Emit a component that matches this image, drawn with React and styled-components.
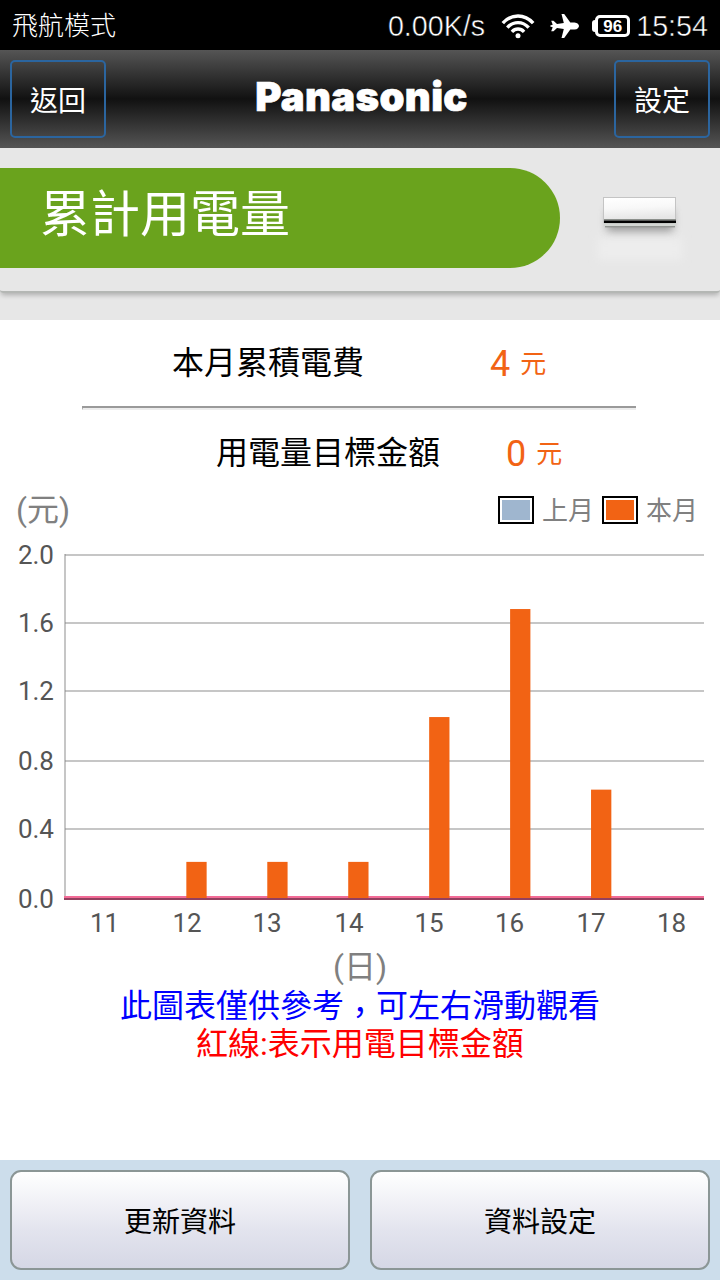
import React from "react";
import styled, { createGlobalStyle } from "styled-components";

const theme = {
  green: "#6aa31d",
  orange: "#f26314",
  blue: "#9fb6cf",
  grey: "#808080",
  panel: "#e7e7e7",
  font: 'Roboto, "Noto Sans CJK TC", sans-serif',
  fontStatus: '"Liberation Sans", "Noto Sans CJK TC", sans-serif',
};

const days = [
  { day: "11", x: 104.5, value: 0 },
  { day: "12", x: 187, value: 0.21 },
  { day: "13", x: 267, value: 0.21 },
  { day: "14", x: 349, value: 0.21 },
  { day: "15", x: 429, value: 1.052 },
  { day: "16", x: 509.5, value: 1.68 },
  { day: "17", x: 591, value: 0.63 },
  { day: "18", x: 671.5, value: 0 },
];

const ticks = [
  { label: "2.0", y: 555 },
  { label: "1.6", y: 623 },
  { label: "1.2", y: 691 },
  { label: "0.8", y: 761 },
  { label: "0.4", y: 829 },
];

export default function App() {
  return (
    <Screen>
      <GlobalStyle />
      <StatusBar>
        <div className="mode">飛航模式</div>
        <div className="speed">0.00K/s</div>
        <WifiIcon />
        <PlaneIcon />
        <BatteryIcon />
        <div className="time">15:54</div>
      </StatusBar>
      <Header>
        <HeaderButton>返回</HeaderButton>
        <Brand>Panasonic</Brand>
        <HeaderButton>設定</HeaderButton>
      </Header>
      <TitleArea>
        <TitlePanel>
          <TitleTab>累計用電量</TitleTab>
          <AirConditioner />
        </TitlePanel>
      </TitleArea>
      <Content>
        <SummaryRow $left={172}>
          <SummaryLabel $width={318}>本月累積電費</SummaryLabel>
          <Amount value="4" />
        </SummaryRow>
        <Divider />
        <SummaryRow $left={216}>
          <SummaryLabel $width={290}>用電量目標金額</SummaryLabel>
          <Amount value="0" />
        </SummaryRow>
        <ChartHead>
          <AxisUnit>(元)</AxisUnit>
          <Legend>
            <Swatch $color={theme.blue} />
            <span>上月</span>
            <Swatch $color={theme.orange} />
            <span>本月</span>
          </Legend>
        </ChartHead>
        <Chart />
        <AxisUnit $center>(日)</AxisUnit>
        <Note $color="#0000ff">
          此圖表僅供參考<Comma>，</Comma>可左右滑動觀看
        </Note>
        <Note $color="#ff0000">紅線:表示用電目標金額</Note>
      </Content>
      <Footer>
        <FooterButton>更新資料</FooterButton>
        <FooterButton>資料設定</FooterButton>
      </Footer>
    </Screen>
  );
}

function Amount({ value }) {
  return (
    <AmountBox>
      <span className="value">{value}</span>
      <span className="unit">元</span>
    </AmountBox>
  );
}

function Chart() {
  return (
    <ChartSvg viewBox="0 540 720 405">
      <rect x="64" y="554" width="2" height="346" fill="#808080" opacity="0.45" />
      {ticks.map((tick) => (
        <g key={tick.label}>
          <rect x="65" y={tick.y - 1} width="639" height="2" fill="#808080" opacity="0.45" />
          <text x="54" y={tick.y + 9} textAnchor="end">
            {tick.label}
          </text>
        </g>
      ))}
      <text x="54" y="908" textAnchor="end">
        0.0
      </text>
      {/* target line, sits on zero while no target is set */}
      <rect x="64" y="896" width="640" height="2" fill="#f36c97" />
      <rect x="64" y="898" width="640" height="2" fill="#93405f" />
      {days.map((item, i) => (
        <g key={item.day}>
          {item.value > 0 && (
            <rect
              x={105.4 + i * 80.94}
              y={898 - item.value * 172}
              width="20.3"
              height={item.value * 172}
              fill={theme.orange}
            />
          )}
          <text x={item.x} y="932" textAnchor="middle">
            {item.day}
          </text>
        </g>
      ))}
    </ChartSvg>
  );
}

function WifiIcon() {
  return (
    <svg className="wifi" width="34" height="26" viewBox="0 0 34 26">
      <g fill="none" stroke="#fff" strokeWidth="3.4">
        <path d="M1.8 10.2C10.4 0.6 23.6 0.6 32.2 10.2" />
        <path d="M6.3 14.6C12.4 7.9 21.6 7.9 27.7 14.6" />
        <path d="M10.9 18.8C14.4 15.1 19.6 15.1 23.1 18.8" />
      </g>
      <circle cx="17" cy="22.7" r="2.5" fill="#fff" />
    </svg>
  );
}

function PlaneIcon() {
  return (
    <svg className="plane" width="30" height="26" viewBox="0 0 30 26">
      <path
        d="M11.5 1H14.2L20.3 9.4H24.5C27.5 9.4 29 11.8 29 13C29 14.2 27.5 16.6 24.5 16.6H20.3L14.2 25H11.5L13.8 16.1L7 14.9L3.5 18.2H1.2L2.7 14.2L0.3 13.5V12.5L2.7 11.8L1.2 7.8H3.5L7 11.1L13.8 9.9Z"
        fill="#fff"
      />
    </svg>
  );
}

function BatteryIcon() {
  return (
    <Battery>
      <span>96</span>
    </Battery>
  );
}

function AirConditioner() {
  return (
    <svg width="120" height="95" viewBox="580 175 120 95">
      <defs>
        <linearGradient id="body" x1="0" y1="0" x2="0.15" y2="1">
          <stop offset="0" stopColor="#fff" />
          <stop offset="0.5" stopColor="#f8f8f8" />
          <stop offset="1" stopColor="#e6e6e6" />
        </linearGradient>
        <filter id="soft" x="-30%" y="-80%" width="160%" height="260%">
          <feGaussianBlur stdDeviation="4" />
        </filter>
      </defs>
      <rect x="598" y="238" width="84" height="22" fill="#ededed" filter="url(#soft)" />
      <rect x="607" y="210" width="66" height="21" fill="#606060" opacity="0.6" filter="url(#soft)" />
      <rect x="603" y="197" width="73" height="26" fill="#c4c4c4" />
      <rect x="604" y="198" width="71" height="21.5" fill="url(#body)" />
      <rect x="604" y="219" width="72" height="1.3" fill="#8b8f8b" />
      <rect x="604" y="220.5" width="72" height="2.6" fill="#000" />
      <rect x="604" y="223.2" width="72" height="3" fill="#d3d6d3" />
      <rect x="605" y="226" width="70" height="1.4" fill="#929592" />
    </svg>
  );
}

const GlobalStyle = createGlobalStyle`
  body {
    margin: 0;
    background-color: #fff;
  }
  * {
    box-sizing: border-box;
  }
`;

const Screen = styled.div`
  width: 720px;
  height: 1280px;
  display: flex;
  flex-direction: column;
  overflow: hidden;
  background-color: #fff;
  font-family: ${theme.font};
`;

const StatusBar = styled.div`
  height: 50px;
  padding: 2px 12px 0 12px;
  display: flex;
  align-items: center;
  background-color: #000;
  color: #fff;
  font-family: ${theme.fontStatus};
  font-size: 28.7px;
  line-height: 48px;
  .mode {
    flex: 1;
    font-size: 26px;
    font-weight: 300;
    line-height: 46px;
  }
  .speed,
  .time {
    -webkit-text-stroke: 0.5px #000;
  }
  .wifi {
    margin-left: 16px;
  }
  .plane {
    margin: 0 12px 0 15px;
  }
  .time {
    margin-left: 6px;
  }
`;

const Battery = styled.div`
  position: relative;
  width: 35px;
  height: 22px;
  margin-left: 3px;
  padding-top: 1px;
  border: 3px solid #fff;
  border-radius: 5px;
  display: flex;
  align-items: center;
  justify-content: center;
  font-size: 17px;
  font-weight: bold;
  line-height: 16px;
  &::before {
    content: "";
    position: absolute;
    left: -6px;
    top: 2px;
    width: 4px;
    height: 12px;
    border-radius: 3px 0 0 3px;
    background-color: #fff;
  }
`;

const Header = styled.div`
  height: 98px;
  padding: 10px;
  display: flex;
  justify-content: space-between;
  background: linear-gradient(#555 0%, #111 50%, #555 100%);
`;

const HeaderButton = styled.button`
  width: 96px;
  height: 78px;
  padding: 0;
  border: 2px solid #2b659f;
  border-radius: 5px;
  background: transparent;
  color: #fff;
  font-family: ${theme.font};
  font-size: 28px;
`;

const Brand = styled.div`
  padding-left: 3px;
  color: #fff;
  font-family: Inter, "Liberation Sans", sans-serif;
  font-size: 40px;
  font-weight: 900;
  line-height: 73px;
  letter-spacing: 0.35px;
  -webkit-text-stroke: 0.7px #fff;
`;

const TitleArea = styled.div`
  height: 172px;
  background-color: ${theme.panel};
`;

const TitlePanel = styled.div`
  height: 145px;
  padding: 20px 20px 0 0;
  display: flex;
  justify-content: space-between;
  border-bottom: 2px solid #b4b7b4;
  border-radius: 0 0 3px 3px;
  box-shadow: 0 3px 5px -1px rgba(0, 0, 0, 0.25);
  svg {
    margin-top: 7px;
  }
`;

const TitleTab = styled.div`
  width: 560px;
  height: 100px;
  padding-left: 40px;
  border-radius: 0 50px 50px 0;
  background-color: ${theme.green};
  color: #fff;
  font-size: 50px;
  line-height: 94px;
`;

const Content = styled.div`
  height: 840px;
  padding-top: 20px;
`;

const SummaryRow = styled.div`
  height: 46px;
  padding-left: ${(props) => props.$left}px;
  display: flex;
  align-items: center;
`;

const SummaryLabel = styled.div`
  width: ${(props) => props.$width}px;
  color: #000;
  font-size: 32px;
  line-height: 42px;
`;

const AmountBox = styled.div`
  display: flex;
  align-items: center;
  color: ${theme.orange};
  .value {
    padding-top: 1px;
    font-size: 36px;
  }
  .unit {
    margin-left: 10px;
    padding-bottom: 4px;
    font-size: 26px;
  }
`;

const Divider = styled.div`
  width: 554px;
  height: 4px;
  margin: 20px 0 20px 82px;
  border-top: 2px solid #9a9a9a;
  border-left: 1px solid #9a9a9a;
  border-bottom: 2px solid #ededed;
`;

const ChartHead = styled.div`
  height: 64px;
  padding: 4px 22px 0 16px;
  display: flex;
  align-items: flex-start;
  justify-content: space-between;
`;

const AxisUnit = styled.div`
  color: ${theme.grey};
  font-size: 32px;
  line-height: 60px;
  ${(props) =>
    props.$center &&
    `
    height: 40px;
    text-align: center;
    line-height: 44px;
  `}
`;

const Legend = styled.div`
  height: 60px;
  display: flex;
  align-items: center;
  color: ${theme.grey};
  font-size: 26px;
  span {
    margin: 0 8px;
    padding-bottom: 3px;
  }
  span:last-child {
    margin-right: 0;
  }
`;

const Swatch = styled.i`
  width: 36px;
  height: 28px;
  padding: 2px;
  border: 2px solid #000;
  background: ${(props) => props.$color} content-box;
  box-shadow: inset 0 0 0 2px #fff;
`;

const ChartSvg = styled.svg`
  display: block;
  width: 720px;
  height: 405px;
  text {
    fill: #555;
    font-family: ${theme.font};
    font-size: 26px;
  }
`;

const Note = styled.div`
  height: 38px;
  padding-top: 4px;
  color: ${(props) => props.$color};
  font-size: 32px;
  line-height: 34px;
  text-align: center;
`;

// drops the comma towards the baseline
const Comma = styled.span`
  position: relative;
  top: 7px;
`;

const Footer = styled.div`
  height: 120px;
  padding: 10px;
  display: flex;
  gap: 20px;
  background-color: #ccddeb;
`;

const FooterButton = styled.button`
  flex: 1;
  height: 100px;
  padding: 0;
  border: 2px solid #8b9696;
  border-radius: 11px;
  background: linear-gradient(#fff 0%, #e3e4ee 60%, #d5d7e5 100%);
  color: #000;
  font-family: ${theme.font};
  font-size: 28px;
`;
